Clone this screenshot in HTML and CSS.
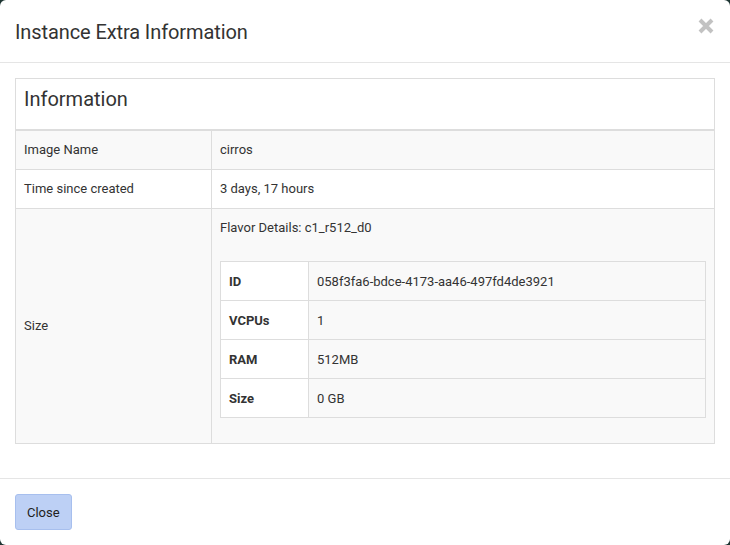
FILE: index.html
```html
<!DOCTYPE html>
<html lang="en">
  <head>
    <meta charset="UTF-8" />
    <title>Instance Extra Information</title>
    <link rel="stylesheet" href="styles.css">
  </head>
  <body>
    <div class="modal">
      <div class="modal__header">
        <h4 class="modal__title">Instance Extra Information</h4>
        <button class="modal__close" aria-label="Close">
          <svg width="16" height="16" viewBox="0 0 16 16">
            <path d="M2 2 L14 14 M14 2 L2 14" stroke="#c2c2c2" stroke-width="4" stroke-linecap="butt" />
          </svg>
        </button>
      </div>

      <div class="modal__body">
        <div class="panel">
          <div class="panel__heading">Information</div>
          <table class="info">
            <tr class="info__row info__row--odd">
              <td class="info__key">Image Name</td>
              <td class="info__value">cirros</td>
            </tr>
            <tr class="info__row">
              <td class="info__key">Time since created</td>
              <td class="info__value">3 days, 17 hours</td>
            </tr>
            <tr class="info__row info__row--odd">
              <td class="info__key">Size</td>
              <td class="info__value">
                <p class="flavor">Flavor Details: c1_r512_d0</p>
                <table class="details">
                  <tr>
                    <th class="details__key">ID</th>
                    <td class="details__value">058f3fa6-bdce-4173-aa46-497fd4de3921</td>
                  </tr>
                  <tr>
                    <th class="details__key">VCPUs</th>
                    <td class="details__value">1</td>
                  </tr>
                  <tr>
                    <th class="details__key">RAM</th>
                    <td class="details__value">512MB</td>
                  </tr>
                  <tr>
                    <th class="details__key">Size</th>
                    <td class="details__value">0 GB</td>
                  </tr>
                </table>
              </td>
            </tr>
          </table>
        </div>
      </div>

      <div class="modal__footer">
        <button class="btn">Close</button>
      </div>
    </div>
  </body>
</html>
```

FILE: styles.css
```css
* {
  box-sizing: border-box;
}

body {
  margin: 0;
  background-color: #1d3532;
  font-family: Roboto, "Liberation Sans", sans-serif;
  font-size: 13px;
  color: #333;
}

.modal {
  width: 730px;
  height: 545px;
  background-color: white;
  border-radius: 6px;
  display: flex;
  flex-direction: column;
}

.modal__header {
  display: flex;
  justify-content: space-between;
  align-items: flex-start;
  padding: 16px 15px 14px;
  border-bottom: 1px solid #e5e5e5;
}

.modal__title {
  margin: 0;
  font-size: 20px;
  font-weight: normal;
  line-height: 32px;
  letter-spacing: -0.1px;
}

.modal__close {
  border: 0;
  background: none;
  padding: 0;
  margin-top: 2px;
  margin-right: 1px;
  width: 16px;
  height: 16px;
}

.modal__body {
  padding: 15px;
  flex: 1;
}

.panel {
  border: 1px solid #ddd;
  margin-bottom: 18px;
}

.panel__heading {
  font-size: 20px;
  line-height: 30px;
  padding: 5px 8px 15px;
  border-bottom: 2px solid #ddd;
}

.info {
  width: 100%;
  border-spacing: 0;
  table-layout: fixed;
}

.info__row > td {
  border-top: 1px solid #ddd;
  padding: 8px;
  line-height: 22px;
  vertical-align: middle;
}

.info__row:first-child > td {
  border-top: 0;
}

.info__row--odd > td {
  background-color: #f9f9f9;
}

.info__row > .info__key {
  width: 196px;
  border-right: 1px solid #ddd;
}

.info__row:last-child > .info__value {
  vertical-align: top;
}

.flavor {
  margin: 0 0 22px;
}

.details {
  width: 100%;
  border-spacing: 0;
  table-layout: fixed;
  border: 1px solid #ddd;
  border-bottom: 0;
  margin-bottom: 17px;
}

.details th,
.details td {
  padding: 9px 8px 7px;
  line-height: 22px;
  border-bottom: 1px solid #ddd;
  text-align: left;
}

.details__key {
  width: 88px;
  font-weight: bold;
  background-color: white;
  border-right: 1px solid #ddd;
}

.details__value {
  background-color: #f9f9f9;
}

.modal__footer {
  border-top: 1px solid #e5e5e5;
  padding: 15px;
}

.btn {
  font-family: Roboto, "Liberation Sans", sans-serif;
  font-size: 13px;
  color: #222;
  background-color: #bdd0f5;
  border: 1px solid #a7bfee;
  border-radius: 3px;
  height: 36px;
  padding: 0 11px;
}
```
